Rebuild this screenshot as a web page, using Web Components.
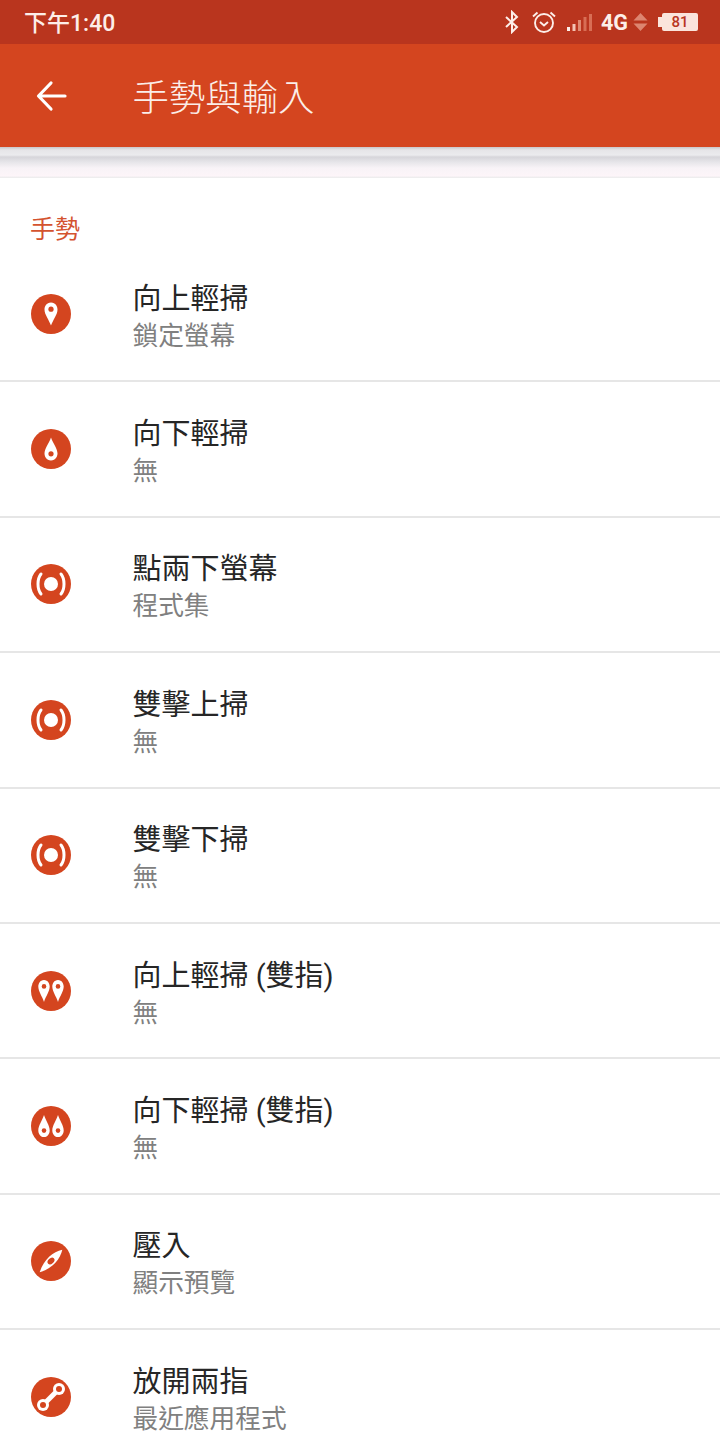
<!DOCTYPE html>
<html lang="zh-Hant">
<head>
<meta charset="utf-8">
<title>手勢與輸入</title>
<style>
  html, body { margin: 0; padding: 0; background: #fff; }
  body { width: 720px; height: 1440px; overflow: hidden; font-family: Roboto, "Noto Sans CJK TC", sans-serif; }
</style>
</head>
<body>
<status-bar></status-bar>
<app-bar>手勢與輸入</app-bar>
<shade-strip></shade-strip>
<section-label>手勢</section-label>
<gesture-row icon="up" label="向上輕掃" value="鎖定螢幕"></gesture-row>
<gesture-row icon="down" label="向下輕掃" value="無"></gesture-row>
<gesture-row icon="tap" label="點兩下螢幕" value="程式集"></gesture-row>
<gesture-row icon="tap" label="雙擊上掃" value="無"></gesture-row>
<gesture-row icon="tap" label="雙擊下掃" value="無"></gesture-row>
<gesture-row icon="up2" label="向上輕掃 (雙指)" value="無"></gesture-row>
<gesture-row icon="down2" label="向下輕掃 (雙指)" value="無"></gesture-row>
<gesture-row icon="press" label="壓入" value="顯示預覽"></gesture-row>
<gesture-row icon="spread" label="放開兩指" value="最近應用程式" last></gesture-row>

<script>
class StatusBar extends HTMLElement {
  constructor() {
    super();
    const shadowRoot = this.attachShadow({ mode: "open" });
    shadowRoot.innerHTML = `
      <style>
        :host {
          display: flex;
          align-items: center;
          height: 44px;
          padding: 0 22px 0 24px;
          background: #b9351e;
          color: #fdeee9;
          font-weight: 500;
        }
        #time { font-size: 23px; flex: 1; position: relative; top: -1px; }
        #right { display: flex; align-items: center; }
        svg { display: block; }
        #net { font-size: 21.5px; font-weight: 700; margin-left: 9px; }
        #batt {
          display: flex;
          align-items: center;
          justify-content: center;
          width: 36px;
          height: 18px;
          background: #fbe4dc;
          color: #b9351e;
          font-size: 15px;
          font-weight: 500;
          border-radius: 2px;
        }
      </style>
      <span id="time">下午1:40</span>
      <div id="right">
        <svg width="18" height="24" viewBox="0 0 18 24" fill="none" stroke="#fdeee9" stroke-width="2">
          <path d="M3 7 14 17 9 22V2l5 5L3 17"/>
        </svg>
        <svg style="margin-left:10px" width="26" height="24" viewBox="0 0 26 24" fill="none" stroke="#fdeee9" stroke-width="1.9">
          <circle cx="13" cy="13" r="9"/>
          <path d="M9 12l4 3.5 4-3.5M2 6.5 6.5 2.500M24 6.500 19.500 2.500"/>
        </svg>
        <svg style="margin-left:10px" width="25" height="20" viewBox="0 0 25 20">
          <rect x="0" y="15" width="3" height="4" fill="#fdeee9"/>
          <rect x="5.500" y="12" width="3" height="7" fill="#f4c4b4"/>
          <rect x="11" y="8" width="3" height="11" fill="#e08a72"/>
          <rect x="16.500" y="5" width="3" height="14" fill="#d86e55"/>
          <rect x="22" y="2" width="3" height="17" fill="#d86e55"/>
        </svg>
        <span id="net">4G</span>
        <svg style="margin-left:5px" width="15" height="18" viewBox="0 0 15 18" fill="#dd8570">
          <path d="M7.500 0 14.500 7.500H.5ZM.5 10.500H14.500L7.500 18Z"/>
        </svg>
        <svg style="margin-left:10px" width="4" height="10" viewBox="0 0 4 10"><rect width="4" height="10" fill="#fbe4dc"/></svg>
        <span id="batt">81</span>
      </div>
    `;
  }
}

class AppBar extends HTMLElement {
  constructor() {
    super();
    const shadowRoot = this.attachShadow({ mode: "open" });
    shadowRoot.innerHTML = `
      <style>
        :host {
          display: flex;
          align-items: center;
          height: 103px;
          background: #d4451f;
          color: #fbeee9;
        }
        #back { width: 132.500px; display: flex; padding-left: 36px; box-sizing: border-box; }
        #title { font-size: 36.4px; font-weight: 300; position: relative; top: -1px; }
      </style>
      <div id="back">
        <svg width="32" height="32" viewBox="0 0 32 32" fill="none" stroke="#fff" stroke-width="3.200" stroke-linecap="round" stroke-linejoin="round">
          <path d="M29 16H3M15 3 2.500 16 15 29"/>
        </svg>
      </div>
      <span id="title"><slot></slot></span>
    `;
  }
}

class ShadeStrip extends HTMLElement {
  constructor() {
    super();
    const shadowRoot = this.attachShadow({ mode: "open" });
    shadowRoot.innerHTML = `
      <style>
        :host {
          display: block;
          height: 31px;
          background: linear-gradient(#c9c6c9 0, #e6e5e8 3px, #ebebee 8px, #d6d5da 10px, #e6e5e9 15px, #f8f3f7 21px, #fdf5f9 29px, #f0eef0 30px, #ececec 31px);
        }
      </style>
    `;
  }
}

class SectionLabel extends HTMLElement {
  constructor() {
    super();
    const shadowRoot = this.attachShadow({ mode: "open" });
    shadowRoot.innerHTML = `
      <style>
        :host {
          display: block;
          height: 69px;
          padding: 36px 0 0 30px;
          box-sizing: border-box;
          color: #d4532f;
          font-size: 25px;
          line-height: 32px;
        }
      </style>
      <slot></slot>
    `;
  }
}

const red = "#d4451f";
const pinUp = (x, w, h) => `<g transform="translate(${x} 26)">
  <path fill="#fff" d="M0 ${-h}C${-w * .7} ${-h} ${-w} ${-h * .65} ${-w} ${-h * .4}C${-w} ${h * .05} ${-w * .3} ${h * .5} 0 ${h} ${w * .3} ${h * .5} ${w} ${h * .05} ${w} ${-h * .4}C${w} ${-h * .65} ${w * .7} ${-h} 0 ${-h}Z"/>
  <circle cy="${-h * .42}" r="${w * .4}" fill="${red}"/></g>`;
const pinDown = (x, w, h) => `<g transform="translate(${x} 26)">
  <path fill="#fff" d="M0 ${h}C${-w * .7} ${h} ${-w} ${h * .65} ${-w} ${h * .4}C${-w} ${-h * .05} ${-w * .3} ${-h * .5} 0 ${-h} ${w * .3} ${-h * .5} ${w} ${-h * .05} ${w} ${h * .4}C${w} ${h * .65} ${w * .7} ${h} 0 ${h}Z"/>
  <circle cy="${h * .42}" r="${w * .4}" fill="${red}"/></g>`;
const glyphs = {
  up: pinUp(26, 6.500, 11.500),
  down: pinDown(26, 6.500, 11.500),
  tap: `<circle cx="26" cy="26" r="7" fill="#fff"/>
        <path d="M16 16C12 21 12 31 16 36M36 16C40 21 40 31 36 36" fill="none" stroke="#fff" stroke-width="3" stroke-linecap="round"/>`,
  up2: pinUp(19, 5.700, 11) + pinUp(33, 5.700, 11),
  down2: pinDown(19, 5.700, 11) + pinDown(33, 5.700, 11),
  press: `<g transform="rotate(45 26 26)">
        <path fill="#fff" d="M26 10C31 18 32.500 30 26 42 19.500 30 21 18 26 10Z"/>
        <ellipse cx="26" cy="26" rx="2.700" ry="4" fill="${red}"/></g>`,
  spread: `<path d="M18 34 34 18" stroke="#fff" stroke-width="5"/>
        <circle cx="18" cy="34" r="6" fill="#fff"/><circle cx="34" cy="18" r="6" fill="#fff"/>
        <circle cx="18" cy="34" r="3" fill="${red}"/><circle cx="34" cy="18" r="3" fill="${red}"/>`,
};

class GestureRow extends HTMLElement {
  connectedCallback() {
    const shadowRoot = this.attachShadow({ mode: "open" });
    const last = this.hasAttribute("last");
    shadowRoot.innerHTML = `
      <style>
        :host {
          display: flex;
          align-items: center;
          height: 135.4px;
          box-sizing: border-box;
          padding-left: 25px;
          border-bottom: 2px solid ${last ? "transparent" : "#e6e6e6"};
        }
        svg { display: block; flex: none; }
        #text { margin-left: 55.500px; display: flex; flex-direction: column; position: relative; top: 3px; }
        #label { font-size: 29px; line-height: 38px; color: #262626; }
        #value { font-size: 25.7px; line-height: 36px; color: #808080; }
      </style>
      <svg width="52" height="52" viewBox="0 0 52 52">
        <circle cx="26" cy="26" r="20" fill="${red}"/>
        ${glyphs[this.getAttribute("icon")]}
      </svg>
      <div id="text">
        <span id="label">${this.getAttribute("label")}</span>
        <span id="value">${this.getAttribute("value")}</span>
      </div>
    `;
  }
}

customElements.define("status-bar", StatusBar);
customElements.define("app-bar", AppBar);
customElements.define("shade-strip", ShadeStrip);
customElements.define("section-label", SectionLabel);
customElements.define("gesture-row", GestureRow);
</script>
</body>
</html>
